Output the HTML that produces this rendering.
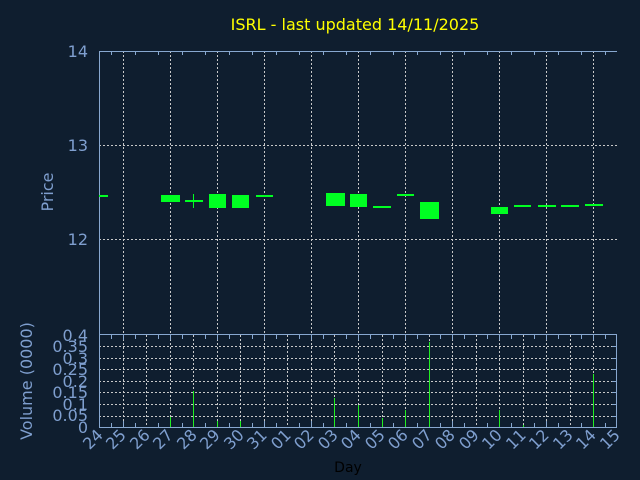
<!DOCTYPE html>
<html><head><style>
html,body{margin:0;padding:0;background:#0f1e2f;}
svg{display:block;font-family:"DejaVu Sans","Liberation Sans",sans-serif;}
</style></head><body>
<svg width="640" height="480" viewBox="0 0 640 480" xmlns="http://www.w3.org/2000/svg">
<rect width="640" height="480" fill="#0f1e2f"/>
<text x="355" y="30" fill="#ffff00" font-size="16" text-anchor="middle">ISRL - last updated 14/11/2025</text>
<g stroke="#c8c8c8" stroke-width="1" stroke-dasharray="2,2" fill="none">
<path d="M99 145.5H617M99 239.5H617"/>
<path d="M123.5 51V334M170.5 51V334M217.5 51V334M264.5 51V334M311.5 51V334M358.5 51V334M405.5 51V334M452.5 51V334M499.5 51V334M546.5 51V334M593.5 51V334"/>
<path d="M99 346.5H617M99 358.5H617M99 369.5H617M99 381.5H617M99 392.5H617M99 404.5H617M99 416.5H617"/>
<path d="M123.5 335V427M146.5 335V427M170.5 335V427M193.5 335V427M217.5 335V427M240.5 335V427M264.5 335V427M287.5 335V427M311.5 335V427M334.5 335V427M358.5 335V427M382.5 335V427M405.5 335V427M429.5 335V427M452.5 335V427M476.5 335V427M499.5 335V427M523.5 335V427M546.5 335V427M570.5 335V427M593.5 335V427"/>
</g>
<g stroke="#88a8d0" stroke-width="1" fill="none">
<path d="M99.5 51V427M99 51.5H617M99 334.5H617M99 427.5H617M616.5 335V427"/>
<path d="M111.5 51V55M135.5 51V55M158.5 51V55M182.5 51V55M205.5 51V55M229.5 51V55M252.5 51V55M276.5 51V55M299.5 51V55M323.5 51V55M346.5 51V55M370.5 51V55M393.5 51V55M417.5 51V55M440.5 51V55M464.5 51V55M487.5 51V55M511.5 51V55M534.5 51V55M558.5 51V55M581.5 51V55M605.5 51V55"/>
<path d="M111.5 335V339M135.5 335V339M158.5 335V339M182.5 335V339M205.5 335V339M229.5 335V339M252.5 335V339M276.5 335V339M299.5 335V339M323.5 335V339M346.5 335V339M370.5 335V339M393.5 335V339M417.5 335V339M440.5 335V339M464.5 335V339M487.5 335V339M511.5 335V339M534.5 335V339M558.5 335V339M581.5 335V339M605.5 335V339"/>
<path d="M111.5 427V423M135.5 427V423M158.5 427V423M182.5 427V423M205.5 427V423M229.5 427V423M252.5 427V423M276.5 427V423M299.5 427V423M323.5 427V423M346.5 427V423M370.5 427V423M393.5 427V423M417.5 427V423M440.5 427V423M464.5 427V423M487.5 427V423M511.5 427V423M534.5 427V423M558.5 427V423M581.5 427V423M605.5 427V423"/>
<path d="M123.5 51V334M170.5 51V56M217.5 51V56M264.5 51V56M311.5 51V56M358.5 51V56M405.5 51V56M452.5 51V56M499.5 51V56M546.5 51V56M593.5 51V56" stroke-dasharray="0" opacity="0"/>
<path d="M123.5 334V340M170.5 334V340M217.5 334V340M264.5 334V340M311.5 334V340M358.5 334V340M405.5 334V340M452.5 334V340M499.5 334V340M546.5 334V340M593.5 334V340"/>
<path d="M123.5 427V421M170.5 427V421M217.5 427V421M264.5 427V421M311.5 427V421M358.5 427V421M405.5 427V421M452.5 427V421M499.5 427V421M546.5 427V421M593.5 427V421"/>
<path d="M612 346.5H617M612 358.5H617M612 369.5H617M612 381.5H617M612 392.5H617M612 404.5H617M612 416.5H617"/>
</g>
<g fill="#00ff22">
<rect x="99" y="195" width="9" height="2"/>
<rect x="161" y="195" width="19" height="7"/>
<rect x="185" y="200" width="18" height="2"/><rect x="193" y="194" width="1" height="14"/>
<rect x="209" y="194" width="17" height="14"/>
<rect x="232" y="195" width="17" height="13"/>
<rect x="256" y="195" width="17" height="2"/>
<rect x="326" y="193" width="19" height="13"/>
<rect x="350" y="194" width="17" height="13"/>
<rect x="373" y="206" width="18" height="2"/>
<rect x="397" y="194" width="17" height="2"/>
<rect x="420" y="202" width="19" height="17"/>
<rect x="491" y="207" width="17" height="7"/>
<rect x="514" y="205" width="17" height="2"/>
<rect x="538" y="205" width="18" height="2"/>
<rect x="561" y="205" width="18" height="2"/>
<rect x="585" y="204" width="18" height="2"/>
</g>
<g fill="#22ee22">
<rect x="170" y="417" width="1" height="10"/>
<rect x="193" y="391" width="1" height="36"/>
<rect x="217" y="421" width="1" height="6"/>
<rect x="240" y="421" width="1" height="6"/>
<rect x="334" y="398" width="1" height="29"/>
<rect x="358" y="405" width="1" height="22"/>
<rect x="382" y="418" width="1" height="9"/>
<rect x="405" y="410" width="1" height="17"/>
<rect x="429" y="342" width="1" height="85"/>
<rect x="499" y="410" width="1" height="17"/>
<rect x="523" y="425" width="1" height="2"/>
<rect x="593" y="374" width="1" height="53"/>
</g>
<g fill="#7f9fcf" font-size="16" text-anchor="end">
<text x="88" y="57">14</text>
<text x="88" y="151">13</text>
<text x="88" y="245">12</text>
<text x="88" y="341">0.4</text>
<text x="88" y="352">0.35</text>
<text x="88" y="364">0.3</text>
<text x="88" y="375">0.25</text>
<text x="88" y="387">0.2</text>
<text x="88" y="398">0.15</text>
<text x="88" y="410">0.1</text>
<text x="88" y="421">0.05</text>
<text x="88" y="433">0</text>
</g>
<text transform="translate(53,192) rotate(-90)" fill="#7f9fcf" font-size="16" text-anchor="middle">Price</text>
<text transform="translate(32,381) rotate(-90)" fill="#7f9fcf" font-size="16" text-anchor="middle">Volume (0000)</text>
<g fill="#7f9fcf" font-size="16" text-anchor="end">
<text transform="translate(104,436) rotate(-45)">24</text>
<text transform="translate(127,436) rotate(-45)">25</text>
<text transform="translate(151,436) rotate(-45)">26</text>
<text transform="translate(174,436) rotate(-45)">27</text>
<text transform="translate(198,436) rotate(-45)">28</text>
<text transform="translate(221,436) rotate(-45)">29</text>
<text transform="translate(245,436) rotate(-45)">30</text>
<text transform="translate(268,436) rotate(-45)">31</text>
<text transform="translate(292,436) rotate(-45)">01</text>
<text transform="translate(315,436) rotate(-45)">02</text>
<text transform="translate(339,436) rotate(-45)">03</text>
<text transform="translate(362,436) rotate(-45)">04</text>
<text transform="translate(386,436) rotate(-45)">05</text>
<text transform="translate(409,436) rotate(-45)">06</text>
<text transform="translate(433,436) rotate(-45)">07</text>
<text transform="translate(456,436) rotate(-45)">08</text>
<text transform="translate(480,436) rotate(-45)">09</text>
<text transform="translate(503,436) rotate(-45)">10</text>
<text transform="translate(527,436) rotate(-45)">11</text>
<text transform="translate(550,436) rotate(-45)">12</text>
<text transform="translate(574,436) rotate(-45)">13</text>
<text transform="translate(597,436) rotate(-45)">14</text>
<text transform="translate(621,436) rotate(-45)">15</text>
</g>
<text x="348" y="472" fill="#000000" font-size="14" text-anchor="middle">Day</text>
</svg>
</body></html>
